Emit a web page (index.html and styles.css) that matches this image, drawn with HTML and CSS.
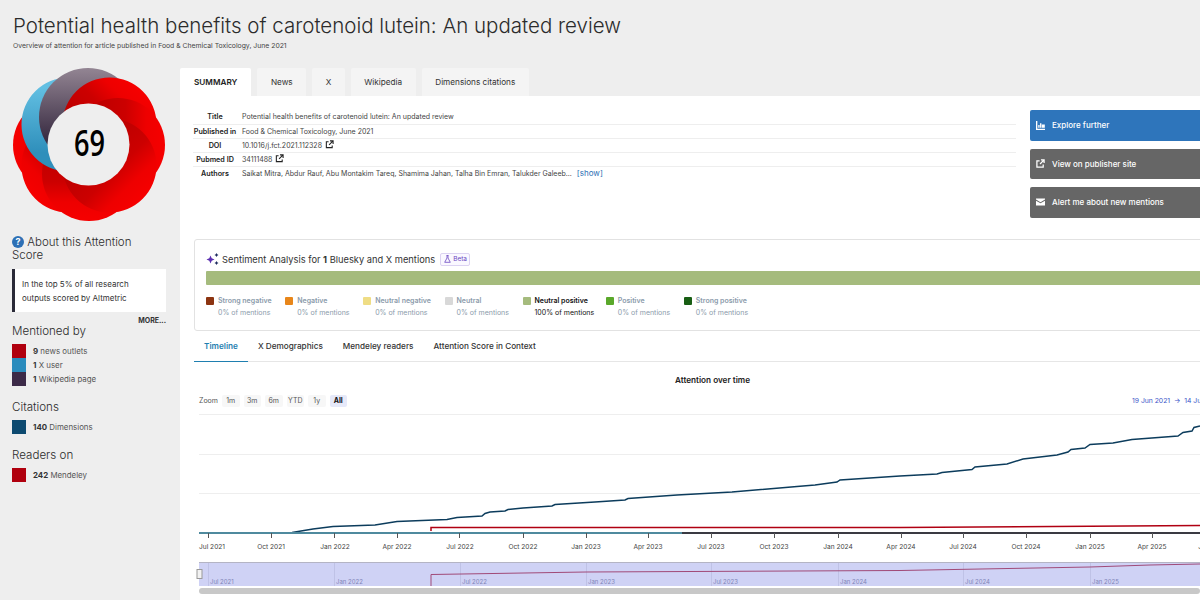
FILE: index.html
```html
<!DOCTYPE html>
<html lang="en">
<head>
<meta charset="utf-8">
<title>Potential health benefits of carotenoid lutein</title>
<link rel="stylesheet" href="styles.css">
</head>
<body>
<header class="page-head">
  <h1>Potential health benefits of carotenoid lutein: An updated review</h1>
  <p>Overview of attention for article published in Food &amp; Chemical Toxicology, June 2021</p>
</header>
<div class="layout">
  <aside class="side">
    <svg class="donut" width="156" height="156" viewBox="11 67 156 156">
      <defs>
        <linearGradient id="gb" x1=".85" y1=".15" x2=".15" y2=".85"><stop offset=".1" stop-color="#62bfe2"/><stop offset=".8" stop-color="#2f8fbb"/></linearGradient>
        <linearGradient id="gg" x1="0" y1="0" x2="0" y2="1"><stop offset="0" stop-color="#938593"/><stop offset=".7" stop-color="#3c2f45"/></linearGradient>
        <linearGradient id="gr" x1="0" y1="0" x2="0" y2="1"><stop offset="0" stop-color="#f60000"/><stop offset=".2" stop-color="#ee0000"/><stop offset=".42" stop-color="#cc0000"/><stop offset="1" stop-color="#b00000"/></linearGradient>
      </defs>
      <circle cx="89" cy="116" r="47" fill="url(#gr)" transform="rotate(270 89 145)"/>
      <circle cx="89" cy="116" r="47" fill="url(#gr)" transform="rotate(225 89 145)"/>
      <circle cx="89" cy="116" r="47" fill="url(#gr)" transform="rotate(180 89 145)"/>
      <circle cx="89" cy="116" r="47" fill="url(#gb)" transform="rotate(-45 89 145)"/>
      <circle cx="88" cy="117" r="49" fill="url(#gg)"/>
      <circle cx="89" cy="116" r="47" fill="url(#gr)" transform="rotate(45 89 145)"/>
      <circle cx="89" cy="116" r="47" fill="url(#gr)" transform="rotate(90 89 145)"/>
      <circle cx="89" cy="116" r="47" fill="url(#gr)" transform="rotate(135 89 145)"/>
      <circle cx="88.500" cy="144.500" r="41" fill="#eeeeee"/>
      <text x="74" y="156" class="score" textLength="31" lengthAdjust="spacingAndGlyphs">69</text>
    </svg>

    <h2 class="about"><span class="q">?</span> About this Attention Score</h2>
    <div class="note">In the top 5% of all research outputs scored by Altmetric</div>
    <div class="more">MORE...</div>

    <h2 class="sec first">Mentioned by</h2>
    <ul class="stats">
      <li><span class="sw red"></span><span><b>9</b> news outlets</span></li>
      <li><span class="sw blue"></span><span><b>1</b> X user</span></li>
      <li><span class="sw plum"></span><span><b>1</b> Wikipedia page</span></li>
    </ul>
    <h2 class="sec">Citations</h2>
    <ul class="stats">
      <li><span class="sw navy"></span><span><b>140</b> Dimensions</span></li>
    </ul>
    <h2 class="sec">Readers on</h2>
    <ul class="stats">
      <li><span class="sw red"></span><span><b>242</b> Mendeley</span></li>
    </ul>
  </aside>

  <main class="main">
    <nav class="tabs">
      <a class="tab on">SUMMARY</a>
      <a class="tab">News</a>
      <a class="tab">X</a>
      <a class="tab">Wikipedia</a>
      <a class="tab">Dimensions citations</a>
    </nav>
    <div class="panel">
      <section class="info">
        <table class="meta">
          <tr><th>Title</th><td>Potential health benefits of carotenoid lutein: An updated review</td></tr>
          <tr><th>Published in</th><td>Food &amp; Chemical Toxicology, June 2021</td></tr>
          <tr><th>DOI</th><td>10.1016/j.fct.2021.112328 <svg class="ext" width="9" height="9" viewBox="0 0 10 10"><path d="M4 2H1.500v6.500H8V6M5.500 1H9v3.500M9 1L4.500 5.500" fill="none" stroke="#222" stroke-width="1.200"/></svg></td></tr>
          <tr><th>Pubmed ID</th><td>34111488 <svg class="ext" width="9" height="9" viewBox="0 0 10 10"><path d="M4 2H1.500v6.500H8V6M5.500 1H9v3.500M9 1L4.500 5.500" fill="none" stroke="#222" stroke-width="1.200"/></svg></td></tr>
          <tr class="last"><th>Authors</th><td>Saikat Mitra, Abdur Rauf, Abu Montakim Tareq, Shamima Jahan, Talha Bin Emran, Talukder Galeeb... <a class="show">[show]</a></td></tr>
        </table>
        <div class="actions">
          <a class="btn primary"><svg width="9" height="9" viewBox="0 0 10 10"><path d="M0 0h1.500v8.500H10V10H0zM2.500 4.500h1.500v3H2.500zM4.500 2.500h1.500v5H4.500zM6.500 4h3.300v3.500H6.500z" fill="#fff"/></svg>Explore further</a>
          <a class="btn"><svg width="9" height="9" viewBox="0 0 10 10"><path d="M4 2H1v7h7V6M5.500 1H9v3.500M9 1L4.500 5.500" fill="none" stroke="#fff" stroke-width="1.400"/></svg>View on publisher site</a>
          <a class="btn"><svg width="9" height="8" viewBox="0 0 10 8"><path d="M0 1.200V0h10v1.200L5 4.200zM0 2.500l5 3 5-3V8H0z" fill="#fff"/></svg>Alert me about new mentions</a>
        </div>
      </section>

      <section class="card">
        <div class="card-title">
          <svg width="13" height="12" viewBox="0 0 13 12"><path d="M4.500 2.500l1.200 2.800 2.800 1.200-2.800 1.200-1.200 2.800-1.200-2.800L.500 6.500l2.800-1.200z" fill="#5b2fb0"/><path d="M10.500 0l.7 1.300 1.300.7-1.300.7-.7 1.300-.7-1.300L8.500 2l1.300-.7zM10.500 8l.7 1.300 1.300.7-1.300.7-.7 1.300-.7-1.300L8.500 10l1.300-.7z" fill="#1d2b5e"/></svg>
          <span>Sentiment Analysis for <b>1</b> Bluesky and X mentions</span>
          <span class="beta"><svg width="7" height="8" viewBox="0 0 7 8"><path d="M2.500.500h2M3 .500v2.500L.700 7.300h5.600L4 3V.500" fill="none" stroke="#6b46c1" stroke-width=".8"/></svg>Beta</span>
        </div>
        <div class="bar"></div>
        <div class="legend">
          <div class="item"><i class="dot s1"></i><div><strong>Strong negative</strong><em>0% of mentions</em></div></div>
          <div class="item"><i class="dot s2"></i><div><strong>Negative</strong><em>0% of mentions</em></div></div>
          <div class="item"><i class="dot s3"></i><div><strong>Neutral negative</strong><em>0% of mentions</em></div></div>
          <div class="item"><i class="dot s4"></i><div><strong>Neutral</strong><em>0% of mentions</em></div></div>
          <div class="item act"><i class="dot s5"></i><div><strong>Neutral positive</strong><em>100% of mentions</em></div></div>
          <div class="item"><i class="dot s6"></i><div><strong>Positive</strong><em>0% of mentions</em></div></div>
          <div class="item"><i class="dot s7"></i><div><strong>Strong positive</strong><em>0% of mentions</em></div></div>
        </div>
      </section>

      <nav class="subtabs">
        <a class="sub on">Timeline</a>
        <a class="sub">X Demographics</a>
        <a class="sub">Mendeley readers</a>
        <a class="sub">Attention Score in Context</a>
      </nav>

      <section class="chart">
        <h3>Attention over time</h3>
        <div class="controls">
          <span class="zoom-label">Zoom</span>
          <span class="zb">1m</span><span class="zb">3m</span><span class="zb">6m</span><span class="zb">YTD</span><span class="zb">1y</span><span class="zb sel">All</span>
          <span class="range">19 Jun 2021 &nbsp;→&nbsp; 14 Jul 2025</span>
        </div>
        <svg class="plot" width="1005" height="190" viewBox="195 410 1005 190">
          <path d="M199 414.500H1200M199 454.500H1200M199 493.500H1200" stroke="#eeeeee" fill="none"/>
          <path d="M431 531V527.500H900L1200 525.500" stroke="#b00012" stroke-width="1.500" fill="none"/>
          <path d="M292 532.500L313 529L333 526.500L375 525L397 521.500L447 519.500L457 517.500L482 516L485 513.500L490 512L505 511L508 509.500L523 508L552 506L555 504.500L595 502L625 500L628 498.500L677 495L732 492L797 486.500L815 485L837 482L840 480L900 476L937 474L942 472.500L972 469.500L975 467L1007 464L1023 459L1057 455L1068 452L1071 449.500L1085 448L1090 444.500L1113 443L1132 439.500L1178 436L1183 432.500L1192 431L1194 427.500L1200 426" stroke="#0c3c5c" stroke-width="1.500" fill="none"/>
          <path d="M199 533H682" stroke="#4f8a9e" stroke-width="2"/>
          <path d="M682 533H1200" stroke="#3a3a42" stroke-width="2"/>
          <path d="M208.500 533v5M271.500 533v5M334.500 533v5M397.500 533v5M459.500 533v5M523.500 533v5M586.500 533v5M648.500 533v5M711.500 533v5M774.500 533v5M838.500 533v5M901.500 533v5M963.500 533v5M1026.500 533v5M1090.500 533v5M1152.500 533v5" stroke="#555"/>
          <g class="ax">
            <text x="212" y="549">Jul 2021</text><text x="271" y="549">Oct 2021</text><text x="335" y="549">Jan 2022</text><text x="397" y="549">Apr 2022</text><text x="460" y="549">Jul 2022</text><text x="523" y="549">Oct 2022</text><text x="586" y="549">Jan 2023</text><text x="648" y="549">Apr 2023</text><text x="711" y="549">Jul 2023</text><text x="774" y="549">Oct 2023</text><text x="838" y="549">Jan 2024</text><text x="901" y="549">Apr 2024</text><text x="963" y="549">Jul 2024</text><text x="1026" y="549">Oct 2024</text><text x="1090" y="549">Jan 2025</text><text x="1152" y="549">Apr 2025</text><text x="1212" y="549">Jul 2025</text>
          </g>
          <rect x="199" y="562" width="1001" height="24" fill="#cfd2f5"/>
          <path d="M199 562.500H1200" stroke="#b4b4c4"/>
          <path d="M208.500 563V586M334.500 563V586M460.500 563V586M586.500 563V586M711.500 563V586M838.500 563V586M963.500 563V586M1090.500 563V586" stroke="#bfc2e6"/>
          <path d="M431 586V574.500L586 572L900 570.500L1090 567L1150 565L1200 564" stroke="#a04a78" fill="none"/>
          <g class="nav">
            <text x="210" y="584">Jul 2021</text><text x="336" y="584">Jan 2022</text><text x="462" y="584">Jul 2022</text><text x="588" y="584">Jan 2023</text><text x="713" y="584">Jul 2023</text><text x="840" y="584">Jan 2024</text><text x="965" y="584">Jul 2024</text><text x="1092" y="584">Jan 2025</text>
          </g>
          <rect x="197" y="569.500" width="5" height="9" fill="#f2f2f2" stroke="#999"/>
          <rect x="199" y="588" width="1001" height="6" rx="3" fill="#c8c8c8"/>
        </svg>
      </section>
    </div>
  </main>
</div>
</body>
</html>
```
FILE: styles.css
```css
* { box-sizing: border-box; }
html, body { margin: 0; height: 600px; overflow: hidden; }
body { width: 1200px; background: #eeeeee; color: #222; font-family: Inter, "Liberation Sans", sans-serif; }
h1, h2, h3, p, ul { margin: 0; padding: 0; }
ul { list-style: none; }

.page-head { height: 68px; padding: 13px 0 0 13px; }
.page-head h1 { font-size: 20.500px; line-height: 26px; font-weight: 300; color: #2b2b2b; white-space: nowrap; }
.page-head p { font-size: 6.850px; line-height: 11px; margin-top: 1px; color: #444; }

.layout { display: flex; height: 532px; }
.side { width: 180px; flex: none; padding-left: 12px; }
.donut { display: block; margin: -1px 0 0 -1px; }
.score { font-family: "Open Sans", sans-serif; font-size: 36px; font-weight: 600; fill: #000; }

.about { font-size: 11.500px; line-height: 13px; font-weight: 300; color: #2b2b2b; margin-top: 13px; width: 150px; }
.q { display: inline-block; width: 12px; height: 12px; border-radius: 50%; background: #2d70b5; color: #fff; font-size: 9px; line-height: 12px; font-weight: 700; text-align: center; vertical-align: top; }
.note { margin-top: 7px; width: 154px; height: 43px; padding: 8px 20px 0 7px; background: #fff; border-left: 3px solid #2a2a38; font-size: 8px; line-height: 14px; color: #333; }
.more { width: 154px; text-align: right; font-size: 7px; font-weight: 700; line-height: 10px; margin-top: 4px; color: #333; }
.sec { font-size: 11.600px; line-height: 16px; font-weight: 300; color: #2b2b2b; margin-top: 13px; }
.sec.first { margin-top: -3px; }
.stats { margin-top: 5px; }
.stats li { display: flex; align-items: center; gap: 7px; height: 14px; font-size: 7.900px; color: #555; white-space: nowrap; }
.stats b { color: #333; font-weight: 700; }
.sw { width: 14px; height: 14px; flex: none; }
.red { background: #b0000e; }
.blue { background: #2b8cbd; }
.plum { background: #3c2a48; }
.navy { background: #0d4a70; }

.main { width: 1020px; flex: none; }
.tabs { display: flex; gap: 6px; height: 28px; align-items: flex-end; }
.tab { display: flex; align-items: center; height: 28px; padding: 0 13.500px; background: #f4f4f4; font-size: 8.200px; color: #333; border-radius: 2px 2px 0 0; white-space: nowrap; }
.tab.on { background: #fff; font-weight: 600; color: #222; padding: 0 14px; }

.panel { background: #fff; height: 504px; overflow: hidden; width: 1020px; }

.info { display: flex; height: 143px; padding: 14px 0 0 13px; }
.meta { width: 823px; height: 70px; flex: none; border-collapse: collapse; font-size: 7px; color: #444; }
.meta th { width: 49px; padding: 0 5px 0 0; text-align: center; font-size: 7.200px; font-weight: 600; color: #222; white-space: nowrap; }
.meta td { padding: 0; white-space: nowrap; }
.meta tr { height: 14px; border-bottom: 1px solid #eeeeee; }
.meta tr.last { border-bottom: 0; }
.ext { vertical-align: -1px; margin-left: 1px; }
.show { color: #2d70b5; font-size: 8px; margin-left: 3px; }
.actions { margin-left: 14px; display: flex; flex-direction: column; gap: 8px; width: 220px; flex: none; }
.btn { display: flex; align-items: center; gap: 7px; height: 30.500px; padding-left: 6px; background: #666; color: #fff; font-size: 8px; font-weight: 500; border-radius: 2px; }
.btn.primary { background: #2e75bb; }

.card { width: 1100px; height: 92px; margin-left: 14px; border: 1px solid #e2e2e2; border-radius: 3px; padding: 12px 11px 0; }
.card-title { display: flex; align-items: center; height: 14px; font-size: 9.300px; color: #333; }
.card-title svg { flex: none; }
.card-title > span:first-of-type { margin-left: 3px; }
.beta { display: flex; align-items: center; gap: 2px; margin-left: 5px; padding: 0 2px 0 3px; height: 13px; border: 1px solid #dcd3f2; border-radius: 2px; background: #faf8ff; color: #6b46c1; font-size: 6.500px; }
.bar { height: 14px; width: 1000px; margin-top: 5px; background: #a5bb7d; border-radius: 1px; }
.legend { display: flex; gap: 13.600px; margin-top: 10px; }
.item { display: flex; gap: 4px; white-space: nowrap; }
.item.act { margin-right: -2px; }
.item strong, .item em { display: block; font-size: 7px; line-height: 12px; color: #8b9bab; font-style: normal; font-weight: 400; }
.item strong { font-weight: 600; }
.item.act strong, .item.act em { color: #111; }
.dot { width: 8px; height: 8px; margin-top: 2px; border-radius: 1px; flex: none; }
.s1 { background: #8c3411; }
.s2 { background: #e8861a; }
.s3 { background: #efdd85; }
.s4 { background: #d8d8d8; }
.s5 { background: #a5bb7d; }
.s6 { background: #5aa82a; }
.s7 { background: #185e14; }

.subtabs { display: flex; height: 31px; margin: 0 0 0 14px; border-bottom: 1px solid #e6e6e6; }
.sub { display: flex; align-items: center; padding: 0 10px 1px; font-size: 8.200px; font-weight: 500; color: #333; white-space: nowrap; height: 31px; }
.sub.on { color: #1f7fb0; font-weight: 600; border-bottom: 1px solid #1f7fb0; }

.chart { position: relative; }
.chart h3 { font-size: 8.200px; font-weight: 600; text-align: center; color: #222; margin: 13px 0 0 65px; line-height: 11px; width: 935px; }
.controls { display: flex; align-items: center; gap: 4px; height: 11px; margin: 9px 0 0 19px; font-size: 7px; color: #555; white-space: nowrap; position: relative; }
.zoom-label { width: 19px; flex: none; }
.zb { display: flex; align-items: center; justify-content: center; flex: none; height: 12px; width: 17.500px; background: #f7f7f7; border-radius: 2px; }
.zb.sel { background: #e6e9f9; color: #111; font-weight: 700; }
.range { position: absolute; left: 933px; color: #3b55c8; font-size: 6.800px; }
.plot { display: block; margin: 4px 0 0 15px; overflow: hidden; }
.ax text { font-family: Inter, sans-serif; font-size: 6.600px; fill: #444; text-anchor: middle; }
.nav text { font-family: Inter, sans-serif; font-size: 6px; fill: #7f84b8; }
```
